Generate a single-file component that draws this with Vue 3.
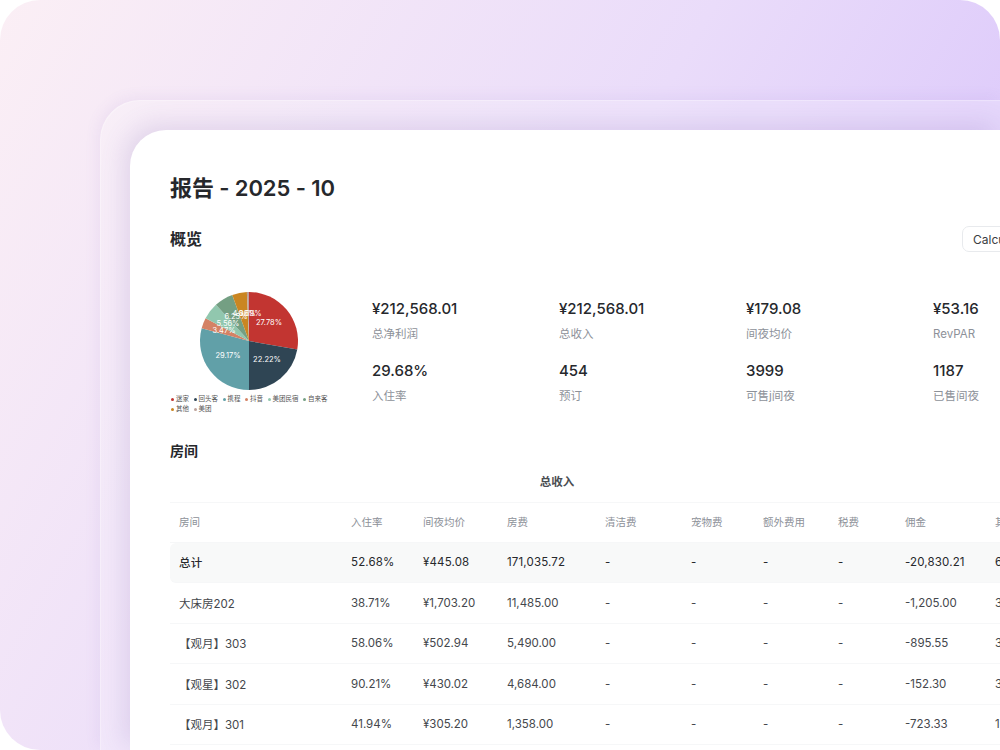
<template>
  <div class="page">
    <div class="backdrop">
      <div class="frame">
        <main class="sheet">
          <h1 class="title">报告 - 2025 - 10</h1>

          <div class="overview-head">
            <h2 class="section">概览</h2>
            <button class="calc-btn">Calculate</button>
          </div>

          <section class="overview">
            <div class="chart">
              <svg class="pie" width="100" height="100" viewBox="-50 -50 100 100">
                <path
                  v-for="slice in pieSlices"
                  :key="slice.name"
                  :d="slice.d"
                  :fill="slice.color"
                />
                <text
                  v-for="label in pieLabels"
                  :key="label.text"
                  :x="label.x"
                  :y="label.y"
                  class="pie-label"
                >{{ label.text }}</text>
              </svg>
              <ul class="legend">
                <li v-for="slice in slices" :key="slice.name">
                  <i :style="{ background: slice.color }"></i>{{ slice.name }}
                </li>
              </ul>
            </div>

            <div class="stats">
              <div v-for="stat in stats" :key="stat.label" class="stat">
                <div class="stat-value">{{ stat.value }}</div>
                <div class="stat-label">{{ stat.label }}</div>
              </div>
            </div>
          </section>

          <h2 class="section rooms-title">房间</h2>
          <div class="group-title">总收入</div>

          <table class="rooms">
            <colgroup>
              <col v-for="w in colWidths" :key="w.name" :style="{ width: w.width + 'px' }" />
            </colgroup>
            <thead>
              <tr>
                <th v-for="col in colWidths" :key="col.name">{{ col.name }}</th>
              </tr>
            </thead>
            <tbody>
              <tr v-for="(row, i) in rows" :key="row[0]" :class="{ total: i === 0 }">
                <td v-for="(cell, j) in row" :key="j">{{ cell }}</td>
              </tr>
            </tbody>
          </table>
        </main>
      </div>
    </div>
  </div>
</template>

<script setup>
const slices = [
  { name: '迷家', value: 27.78, color: '#c23531' },
  { name: '回头客', value: 22.22, color: '#2f4554' },
  { name: '携程', value: 29.17, color: '#61a0a8' },
  { name: '抖音', value: 3.47, color: '#d48265' },
  { name: '美团民宿', value: 5.56, color: '#91c7ae' },
  { name: '自来客', value: 6.25, color: '#749f83' },
  { name: '其他', value: 4.86, color: '#ca8622' },
  { name: '美团', value: 0.69, color: '#bda29a' }
]

const R = 49
let acc = 0
const pieSlices = slices.map((s) => {
  const a0 = (acc / 100) * Math.PI * 2
  acc += s.value
  const a1 = (acc / 100) * Math.PI * 2
  const large = a1 - a0 > Math.PI ? 1 : 0
  const p = (a) => `${(R * Math.sin(a)).toFixed(2)} ${(-R * Math.cos(a)).toFixed(2)}`
  return { ...s, d: `M0 0L${p(a0)}A${R} ${R} 0 ${large} 1 ${p(a1)}Z` }
})

const pieLabels = [
  { text: '27.78%', x: 20, y: -18 },
  { text: '22.22%', x: 18, y: 19 },
  { text: '29.17%', x: -21, y: 15 },
  { text: '3.47%', x: -25, y: -10 },
  { text: '5.56%', x: -21, y: -17 },
  { text: '6.25%', x: -13, y: -24 },
  { text: '4.86%', x: -5, y: -27 },
  { text: '0.69%', x: 1, y: -27 }
]

const stats = [
  { value: '¥212,568.01', label: '总净利润' },
  { value: '¥212,568.01', label: '总收入' },
  { value: '¥179.08', label: '间夜均价' },
  { value: '¥53.16', label: 'RevPAR' },
  { value: '29.68%', label: '入住率' },
  { value: '454', label: '预订' },
  { value: '3999', label: '可售j间夜' },
  { value: '1187', label: '已售间夜' }
]

const colWidths = [
  { name: '房间', width: 172 },
  { name: '入住率', width: 72 },
  { name: '间夜均价', width: 84 },
  { name: '房费', width: 98 },
  { name: '清洁费', width: 86 },
  { name: '宠物费', width: 72 },
  { name: '额外费用', width: 75 },
  { name: '税费', width: 67 },
  { name: '佣金', width: 90 },
  { name: '其他费用', width: 90 }
]

const rows = [
  ['总计', '52.68%', '¥445.08', '171,035.72', '-', '-', '-', '-', '-20,830.21', '62,362.50'],
  ['大床房202', '38.71%', '¥1,703.20', '11,485.00', '-', '-', '-', '-', '-1,205.00', '3,200.00'],
  ['【观月】303', '58.06%', '¥502.94', '5,490.00', '-', '-', '-', '-', '-895.55', '3,200.00'],
  ['【观星】302', '90.21%', '¥430.02', '4,684.00', '-', '-', '-', '-', '-152.30', '3,200.00'],
  ['【观月】301', '41.94%', '¥305.20', '1,358.00', '-', '-', '-', '-', '-723.33', '1,200.00']
]
</script>

<style scoped>
.page {
  width: 1000px;
  height: 750px;
  overflow: hidden;
  background: #fff;
  font-family: Inter, "Noto Sans CJK SC", sans-serif;
  color: #26282c;
}

.backdrop {
  height: 100%;
  box-sizing: border-box;
  padding: 100px 0 0 100px;
  border-radius: 40px;
  background: linear-gradient(120deg, #fbeff5 0%, #eadcfa 50%, #dac6fb 85%, #dac6fb 100%);
}

.frame {
  height: 100%;
  box-sizing: border-box;
  padding: 30px 0 0 30px;
  border-radius: 40px 0 0 0;
  background: rgba(255, 255, 255, 0.2);
  box-shadow:
    -3px -3px 14px rgba(120, 90, 190, 0.07),
    inset 1px 1px 1px rgba(255, 255, 255, 0.3);
}

.sheet {
  height: 100%;
  box-sizing: border-box;
  padding: 40px 0 0 40px;
  border-radius: 36px 0 0 0;
  background: #fff;
  box-shadow: -6px -6px 24px rgba(110, 80, 170, 0.16);
  overflow: hidden;
}

.title {
  margin: 0;
  font-size: 22px;
  line-height: 36px;
  font-weight: 600;
  letter-spacing: -0.1px;
}

.overview-head {
  display: flex;
  justify-content: space-between;
  align-items: center;
  margin-top: 20px;
  height: 26px;
}

.section {
  margin: 0;
  font-size: 16px;
  line-height: 24px;
  font-weight: 600;
}

.calc-btn {
  flex: none;
  width: 80px;
  height: 26px;
  margin-right: -42px;
  padding: 0 10px;
  text-align: left;
  font: 12px Inter, sans-serif;
  color: #3a3d42;
  background: #fff;
  border: 1px solid #e8eaed;
  border-radius: 7px;
}

.overview {
  display: flex;
  margin-top: 39px;
}

.chart {
  flex: none;
  width: 170px;
  margin-left: -2px;
}

.pie {
  display: block;
  margin: 0 0 0 31px;
}

.pie-label {
  font-size: 7.5px;
  fill: #fff;
  text-anchor: middle;
  dominant-baseline: middle;
}

.legend {
  display: flex;
  flex-wrap: wrap;
  gap: 2px 4.5px;
  margin: 4px 0 0 3px;
  padding: 0;
  list-style: none;
  font-size: 6.5px;
  line-height: 8px;
  color: #555;
}

.legend li {
  display: flex;
  align-items: center;
  gap: 2px;
}

.legend i {
  width: 3px;
  height: 3px;
  border-radius: 50%;
}

.stats {
  display: grid;
  flex: none;
  grid-template-columns: repeat(4, 187px);
  row-gap: 9px;
  margin: 7px 0 0 34px;
}

.stat-value {
  font-size: 15px;
  line-height: 22px;
  font-weight: 500;
  white-space: nowrap;
}

.stat-label {
  margin-top: 4px;
  font-size: 11.5px;
  line-height: 20px;
  color: #8d9199;
  white-space: nowrap;
}

.rooms-title {
  margin-top: 26px;
  font-size: 14px;
}

.group-title {
  width: 774px;
  margin-top: 10px;
  text-align: center;
  font-size: 11.5px;
  line-height: 18px;
  font-weight: 600;
  color: #4a4d52;
}

.rooms {
  table-layout: fixed;
  width: 906px;
  margin-top: 11px;
  border-collapse: separate;
  border-spacing: 0;
  font-size: 11.5px;
}

.rooms th,
.rooms td {
  height: 40.5px;
  padding: 0 9px;
  box-sizing: border-box;
  text-align: left;
  white-space: nowrap;
  overflow: hidden;
  border-bottom: 1px solid #f6f7f8;
}

.rooms th {
  padding-bottom: 2px;
  font-weight: 400;
  font-size: 10.5px;
  color: #8d9199;
  border-top: 1px solid #f6f7f8;
}

.rooms td {
  color: #44474c;
}

.rooms .total td {
  background: #f8f9f9;
  color: #26282c;
  letter-spacing: 0.15px;
}

.rooms .total td:first-child {
  border-radius: 6px 0 0 6px;
  font-weight: 500;
}
</style>

<style>
html,
body {
  margin: 0;
  background: #fff;
}
</style>
